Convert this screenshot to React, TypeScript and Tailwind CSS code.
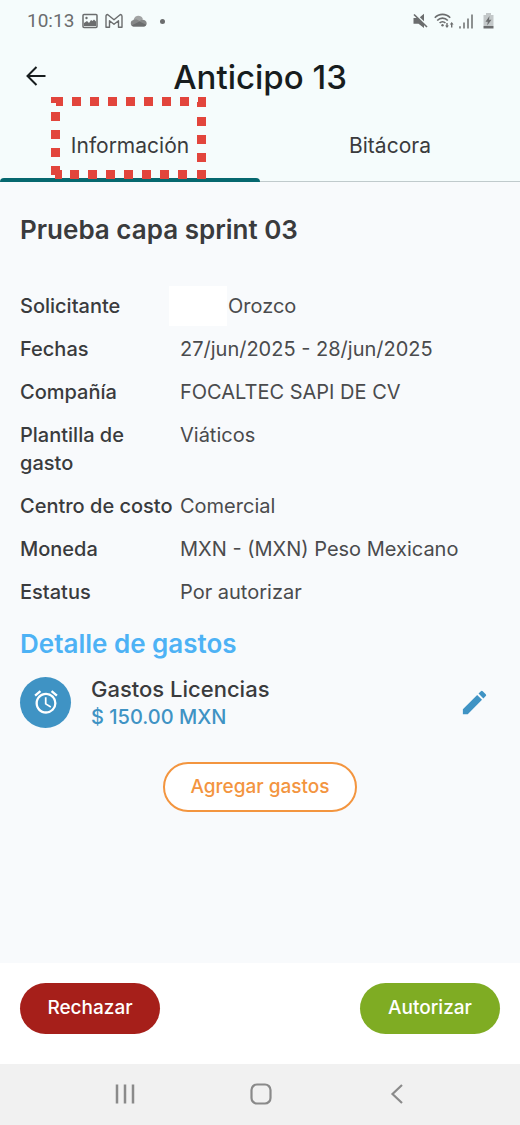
import { useState, type ReactNode } from "react";
import { MdAlarm, MdEdit } from "react-icons/md";

function StatusBar() {
  return (
    <div className="flex h-10 items-center justify-between pt-[2px] pr-[26px] pl-[27px] text-[#6b6d6e]">
      <div className="flex items-center">
        <span className="w-[55px] font-[Roboto,sans-serif] text-[19px] leading-6">10:13</span>
        <svg className="h-4 w-4" viewBox="0 0 16 16" aria-hidden="true">
          <rect x="1" y="1.5" width="14" height="13" rx="1" fill="none" stroke="currentColor" strokeWidth="1.5" />
          <path d="M2 13V10l3-2 2 2 2-3 1.500 1L12 6.500l2 2V13z" fill="currentColor" />
          <circle cx="4.500" cy="5" r="1.200" fill="currentColor" />
        </svg>
        <svg className="ml-[7px] h-4 w-[18px]" viewBox="0 0 18 16" aria-hidden="true">
          <path
            d="M1 3.300Q1 1.500 2.600 1.500L9 6.700l6.400-5.200Q17 1.500 17 3.300V14.300H13.500V7.700L9 11.200 4.500 7.700v6.600H1z"
            fill="none"
            stroke="currentColor"
            strokeWidth="1.400"
            strokeLinejoin="round"
          />
        </svg>
        <svg className="ml-[7px] h-3 w-[17px]" viewBox="0 0 17 12" aria-hidden="true">
          <path d="M3.500 5.200C4.500 0 11 -.8 13 4.200L9 7z" fill="#a2a4a4" />
          <path d="M3.500 11.500a3.300 3.300 0 0 1 0-6.500C6 4 8 5 9.500 6 12 3.500 16.500 4.500 16.700 8.300c0 2-1.200 3.200-2.700 3.200z" fill="#858787" />
          <path d="M1.500 10.500 9.500 6.500l6.700 3.300c-.5 1.100-1.300 1.700-2.200 1.700H3.500c-.8 0-1.500-.4-2-1z" fill="currentColor" />
        </svg>
        <span className="ml-[13px] h-[5px] w-[5px] rounded-full bg-[#6b6d6e]" />
      </div>
      <div className="flex items-center">
        <svg className="h-4 w-[15px]" viewBox="0 0 15 16" aria-hidden="true">
          <path d="M.5 5h4L11 11v4L5.500 10.800H.5zM6.800 4.300 11 .8v7.500z" fill="currentColor" />
          <path d="M1 1.500 14 14" stroke="currentColor" strokeWidth="1.700" />
        </svg>
        <svg className="ml-[6px] h-4 w-5" viewBox="0 0 20 16" aria-hidden="true">
          <g fill="none" stroke="currentColor" strokeWidth="1.600">
            <path d="M.8 4.800C5 .2 12 .2 16.200 4.800" />
            <path d="M3.200 7.500c3-3.200 7.600-3.200 10.600 0" />
            <path d="M5.600 10c1.600-1.700 4.200-1.700 5.800 0" />
          </g>
          <circle cx="8.500" cy="12.300" r="1.200" fill="currentColor" />
          <path d="M12.300 10h1.400v2.500h1.200L13 15l-1.900-2.500h1.200zM17 14.500h1.400v-3h1.200L17.700 9l-1.900 2.500H17z" fill="currentColor" />
        </svg>
        <svg className="ml-[5px] h-4 w-[14px]" viewBox="0 0 14 16" aria-hidden="true">
          <path d="M1 13.200v2.300M5 9.500v6M9 5.500v10M13 1.500v14" stroke="currentColor" strokeWidth="1.500" />
        </svg>
        <svg className="ml-[10px] h-4 w-[11px]" viewBox="0 0 11 16" aria-hidden="true">
          <path d="M3 0h5v2h2.500v11H.5V2H3z" fill="#c3c8c9" />
          <path d="M.5 13h10v2.500H.5z" fill="currentColor" />
          <path d="M6.500 3 2.500 8.700h2.300L4.200 12.500l4.300-5.700H6z" fill="currentColor" />
        </svg>
      </div>
    </div>
  );
}

const SQUARES: [number, number, number, number][] = [
  [0, 0, 12, 5], [5, 4, 7, 5], [0, 0, 5, 6],
  [21, 0, 9, 9], [39, 0, 9, 9], [57, 0, 9, 9], [75, 0, 9, 9], [93, 0, 9, 9], [111, 0, 9, 9], [129, 0, 9, 9],
  [147, 0, 8, 10], [146, 5, 9, 5],
  [0, 15, 9, 9], [0, 33, 9, 9], [0, 51, 9, 9], [0, 69, 9, 9],
  [146, 20, 9, 9], [146, 38, 9, 9], [146, 56, 9, 9],
  [4, 73, 7, 9], [19, 73, 9, 9], [37, 73, 9, 9], [55, 73, 9, 9], [73, 73, 9, 9], [91, 73, 9, 9], [109, 73, 9, 9], [127, 73, 9, 9],
  [146, 73, 9, 9],
];

function Highlight() {
  return (
    <svg className="pointer-events-none absolute -top-[15px] left-[51px] h-[82px] w-[155px]" viewBox="0 0 155 82" aria-hidden="true">
      {SQUARES.map(([x, y, w, h], i) => (
        <rect key={i} x={x} y={y} width={w} height={h} fill="#e2453c" />
      ))}
    </svg>
  );
}

function Field({ label, children }: { label: string; children: ReactNode }) {
  return (
    <div className="grid grid-cols-[160px_1fr]">
      <dt className="font-medium whitespace-pre-line">{label}</dt>
      <dd className="relative text-[#4a4b4d]">{children}</dd>
    </div>
  );
}

const TABS = ["Información", "Bitácora"];

export default function App() {
  const [tab, setTab] = useState(0);
  return (
    <div className="flex min-h-screen flex-col bg-[#f8fafc] font-[Inter,sans-serif] text-[#3a3b3d]">
      <header className="bg-[#f5fcfc]">
        <StatusBar />
        <div className="grid h-[72px] grid-cols-[40px_1fr_40px] items-center px-4">
          <button type="button" aria-label="Volver" className="flex h-10 w-10 items-center justify-center text-[#171d1e]">
            <svg className="h-5 w-5" viewBox="0 0 20 20" fill="none" stroke="currentColor" strokeWidth="2" aria-hidden="true">
              <path d="M19.500 10H1.500M10.500 1 1.500 10l9 9" />
            </svg>
          </button>
          <h1 className="pt-[2px] text-center text-[33px] leading-10 font-medium text-[#171d1e]">Anticipo 13</h1>
        </div>
        <div role="tablist" className="relative grid h-[70px] grid-cols-2 border-b border-[#c0cacc]">
          {TABS.map((name, i) => (
            <button
              key={name}
              type="button"
              role="tab"
              aria-selected={tab === i}
              onClick={() => setTab(i)}
              className="relative -mb-px flex justify-center pt-5 text-[21px] leading-7"
            >
              {name}
              {tab === i && <span className="absolute inset-x-0 bottom-0 h-1 rounded-t bg-[#06686f]" />}
            </button>
          ))}
          <Highlight />
        </div>
      </header>

      <main className="flex-1 px-5 pt-8 pb-8">
        <h2 className="text-[26px] leading-8 font-semibold">Prueba capa sprint 03</h2>
        <dl className="mt-[46px] flex flex-col gap-[15px] text-xl leading-7">
          <Field label="Solicitante">
            <span className="absolute -top-[6px] -left-[11px] h-10 w-[58px] bg-white" />
            <span className="pl-12">Orozco</span>
          </Field>
          <Field label="Fechas">27/jun/2025 - 28/jun/2025</Field>
          <Field label="Compañía">FOCALTEC SAPI DE CV</Field>
          <Field label={"Plantilla de\ngasto"}>Viáticos</Field>
          <Field label="Centro de costo">Comercial</Field>
          <Field label="Moneda">MXN - (MXN) Peso Mexicano</Field>
          <Field label="Estatus">Por autorizar</Field>
        </dl>

        <h2 className="mt-[22px] text-[26px] leading-8 font-semibold text-[#4db2f5]">Detalle de gastos</h2>
        <div className="mt-[13px] flex items-center gap-5">
          <span className="flex h-[51px] w-[51px] items-center justify-center rounded-full bg-[#3f93c4] text-white">
            <MdAlarm className="h-7 w-7" />
          </span>
          <div className="flex-1 pt-[2px]">
            <p className="text-[22px] leading-7 font-medium">Gastos Licencias</p>
            <p className="text-[20px] leading-7 font-medium text-[#3f93c4]">$ 150.00 MXN</p>
          </div>
          <button type="button" aria-label="Editar gasto" className="flex h-[52px] w-[52px] items-center justify-center text-[#3f93c4]">
            <MdEdit className="h-[31px] w-[31px]" />
          </button>
        </div>
        <div className="mt-[31px] flex justify-center">
          <button type="button" className="h-[50px] rounded-full border-2 border-[#f3953f] bg-white px-[25px] text-[19px] font-medium text-[#f3953f]">
            Agregar gastos
          </button>
        </div>
      </main>

      <footer>
        <div className="flex items-center justify-between bg-white px-5 pt-5 pb-[30px] text-[19px] font-medium text-white">
          <button type="button" className="h-[51px] w-[140px] rounded-full bg-[#a61f1a]">Rechazar</button>
          <button type="button" className="h-[51px] w-[140px] rounded-full bg-[#7fac23]">Autorizar</button>
        </div>
        <nav className="flex h-[61px] items-center justify-center gap-24 bg-[#f1f1f1] pb-[2px] pl-[2px] text-[#8a8a8a]">
          <button type="button" aria-label="Recientes" className="flex w-10 justify-center">
            <svg className="h-5 w-5" viewBox="0 0 20 20" stroke="currentColor" strokeWidth="2.500" aria-hidden="true">
              <path d="M2 .5v19M10 .5v19M18 .5v19" />
            </svg>
          </button>
          <button type="button" aria-label="Inicio" className="flex w-10 justify-center">
            <svg className="h-[22px] w-[22px]" viewBox="0 0 22 22" fill="none" stroke="currentColor" strokeWidth="2.200" aria-hidden="true">
              <rect x="1.500" y="1.500" width="19" height="19" rx="5.500" />
            </svg>
          </button>
          <button type="button" aria-label="Atrás" className="flex w-10 justify-center">
            <svg className="h-5 w-5" viewBox="0 0 20 20" fill="none" stroke="currentColor" strokeWidth="2.200" aria-hidden="true">
              <path d="M15 1 5.500 10l9.500 9" />
            </svg>
          </button>
        </nav>
      </footer>
    </div>
  );
}
